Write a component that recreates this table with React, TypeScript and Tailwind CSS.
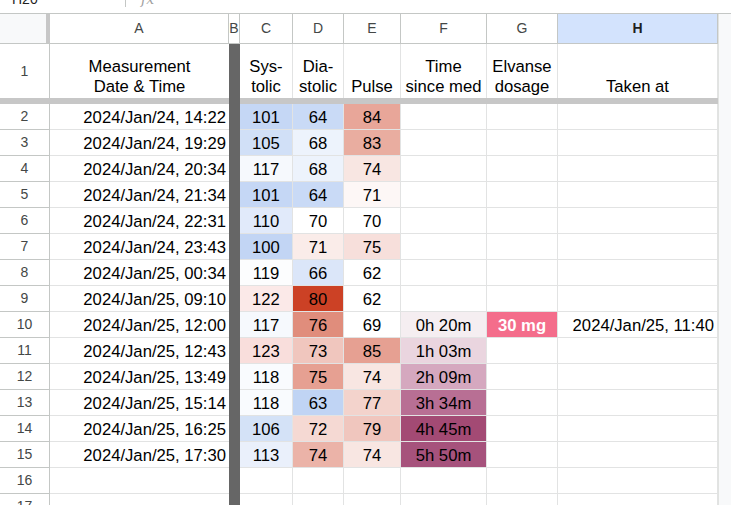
const rows = [
  { date: "2024/Jan/24, 14:22", sys: "101", sysBg: "bg-[#c5d7f5]", dia: "64", diaBg: "bg-[#c9daf6]", pulse: "84", pulseBg: "bg-[#e8a699]" },
  { date: "2024/Jan/24, 19:29", sys: "105", sysBg: "bg-[#d1e0f7]", dia: "68", diaBg: "bg-[#edf3fc]", pulse: "83", pulseBg: "bg-[#e9ada0]" },
  { date: "2024/Jan/24, 20:34", sys: "117", sysBg: "bg-[#f6f9fd]", dia: "68", diaBg: "bg-[#edf3fc]", pulse: "74", pulseBg: "bg-[#f8e6e2]" },
  { date: "2024/Jan/24, 21:34", sys: "101", sysBg: "bg-[#c5d7f5]", dia: "64", diaBg: "bg-[#c9daf6]", pulse: "71", pulseBg: "bg-[#fdf7f6]" },
  { date: "2024/Jan/24, 22:31", sys: "110", sysBg: "bg-[#e1eafa]", dia: "70", diaBg: "bg-white", pulse: "70", pulseBg: "bg-white" },
  { date: "2024/Jan/24, 23:43", sys: "100", sysBg: "bg-[#c2d5f4]", dia: "71", diaBg: "bg-[#faece9]", pulse: "75", pulseBg: "bg-[#f7dfdb]" },
  { date: "2024/Jan/25, 00:34", sys: "119", sysBg: "bg-[#fcfdfe]", dia: "66", diaBg: "bg-[#dbe6f9]", pulse: "62", pulseBg: "bg-white" },
  { date: "2024/Jan/25, 09:10", sys: "122", sysBg: "bg-[#fbe9e8]", dia: "80", diaBg: "bg-[#cc4125]", pulse: "62", pulseBg: "bg-white" },
  { date: "2024/Jan/25, 12:00", sys: "117", sysBg: "bg-[#f6f9fd]", dia: "76", diaBg: "bg-[#e08d7c]", pulse: "69", pulseBg: "bg-white", since: "0h 20m", sinceBg: "bg-[#f5eef1]", dose: "30 mg", taken: "2024/Jan/25, 11:40" },
  { date: "2024/Jan/25, 12:43", sys: "123", sysBg: "bg-[#f9dedc]", dia: "73", diaBg: "bg-[#f0c6be]", pulse: "85", pulseBg: "bg-[#e6a092]", since: "1h 03m", sinceBg: "bg-[#ead5df]" },
  { date: "2024/Jan/25, 13:49", sys: "118", sysBg: "bg-[#f9fbfe]", dia: "75", diaBg: "bg-[#e6a092]", pulse: "74", pulseBg: "bg-[#f8e6e2]", since: "2h 09m", sinceBg: "bg-[#d5a8bf]" },
  { date: "2024/Jan/25, 15:14", sys: "118", sysBg: "bg-[#f9fbfe]", dia: "63", diaBg: "bg-[#c0d4f4]", pulse: "77", pulseBg: "bg-[#f3d3cc]", since: "3h 34m", sinceBg: "bg-[#b86f94]" },
  { date: "2024/Jan/25, 16:25", sys: "106", sysBg: "bg-[#d4e2f7]", dia: "72", diaBg: "bg-[#f5d9d3]", pulse: "79", pulseBg: "bg-[#f0c6be]", since: "4h 45m", sinceBg: "bg-[#a34a74]" },
  { date: "2024/Jan/25, 17:30", sys: "113", sysBg: "bg-[#eaf0fb]", dia: "74", diaBg: "bg-[#ebb3a8]", pulse: "74", pulseBg: "bg-[#f8e6e2]", since: "5h 50m", sinceBg: "bg-[#a6527c]" },
];

type Row = {
  date?: string;
  sys?: string;
  sysBg?: string;
  dia?: string;
  diaBg?: string;
  pulse?: string;
  pulseBg?: string;
  since?: string;
  sinceBg?: string;
  dose?: string;
  taken?: string;
};

const cell = "h-[26px] pt-[1px] border-r border-b border-[#e2e3e3] flex items-center";

const DataRow = ({ n, r }: { n: number; r: Row }) => (
  <>
    <div className="h-[26px] border-r border-b border-[#c4c7c5] flex items-center justify-center text-[14px] text-[#444746]">
      {n}
    </div>
    <div className="h-[26px] pt-[1px] border-b border-[#e2e3e3] flex items-center justify-end pr-[3px]">{r.date}</div>
    <div className="h-[26px] bg-[#666666]" />
    <div className={`${cell} justify-center ${r.sysBg ?? ""}`}>{r.sys}</div>
    <div className={`${cell} justify-center ${r.diaBg ?? ""}`}>{r.dia}</div>
    <div className={`${cell} justify-center ${r.pulseBg ?? ""}`}>{r.pulse}</div>
    <div className={`${cell} justify-center ${r.sinceBg ?? ""}`}>{r.since}</div>
    <div className={`${cell} justify-center ${r.dose ? "bg-[#f46d8b] font-bold text-white" : ""}`}>{r.dose}</div>
    <div className={`${cell} justify-end pr-[3px]`}>{r.taken}</div>
  </>
);

const letters = ["A", "B", "C", "D", "E", "F", "G"];

export default function App() {
  return (
    <div className="w-[731px] h-[505px] overflow-hidden bg-white font-['Liberation_Sans',Arial,sans-serif] text-[16.67px] text-black">
      {/* formula bar, scrolled mostly out of view */}
      <div className="h-[14px] border-b border-[#c4c7c5] flex overflow-hidden">
        <div className="w-[125px] -mt-[8px] pl-[12px] text-[14px] leading-[14px] text-[#1f1f1f]">H20</div>
        <div className="w-px h-[7px] bg-[#c4c7c5]" />
        <div className="-mt-[8px] pl-[15px] text-[14px] leading-[14px] italic text-[#a0a0a0] font-['DejaVu_Serif',serif]">fx</div>
      </div>

      <div className="flex">
        <div className="grid w-[718px] grid-cols-[50px_179px_11px_53px_51px_57px_86px_71px_160px]">
          {/* column letters */}
          <div className="h-[30px] border-b border-[#c4c7c5] flex">
            <div className="flex-1 bg-[#f8f9fa]" />
            <div className="w-[4px] bg-[#c7c7c7]" />
          </div>
          {letters.map((l) => (
            <div
              key={l}
              className="h-[30px] border-r border-b border-[#c4c7c5] flex items-center justify-center text-[14px] text-[#444746]"
            >
              {l}
            </div>
          ))}
          <div className="h-[30px] border-r border-b border-[#c4c7c5] bg-[#d3e3fd] flex items-center justify-center text-[14px] font-bold text-[#1f1f1f]">
            H
          </div>

          {/* header row */}
          <div className="h-[54px] border-r border-[#c4c7c5] flex items-center justify-center text-[14px] text-[#444746]">1</div>
          <div className="h-[54px] flex items-end justify-center text-center leading-[20px] pb-[1px]">
            Measurement
            <br />
            Date &amp; Time
          </div>
          <div className="h-[54px] bg-[#666666]" />
          <div className="h-[54px] border-r border-[#e2e3e3] flex items-end justify-center text-center leading-[20px] pb-[1px]">
            Sys-
            <br />
            tolic
          </div>
          <div className="h-[54px] border-r border-[#e2e3e3] flex items-end justify-center text-center leading-[20px] pb-[1px]">
            Dia-
            <br />
            stolic
          </div>
          <div className="h-[54px] border-r border-[#e2e3e3] flex items-end justify-center text-center leading-[20px] pb-[1px]">
            Pulse
          </div>
          <div className="h-[54px] border-r border-[#e2e3e3] flex items-end justify-center text-center leading-[20px] pb-[1px] whitespace-nowrap">
            Time
            <br />
            since med
          </div>
          <div className="h-[54px] border-r border-[#e2e3e3] flex items-end justify-center text-center leading-[20px] pb-[1px]">
            Elvanse
            <br />
            dosage
          </div>
          <div className="h-[54px] border-r border-[#e2e3e3] flex items-end justify-center text-center leading-[20px] pb-[1px]">
            Taken at
          </div>

          {/* frozen row divider */}
          <div className="h-[6px] bg-[#c7c7c7]" />
          <div className="h-[6px] bg-[#c7c7c7]" />
          <div className="h-[6px] bg-[#666666]" />
          <div className="h-[6px] bg-[#c7c7c7] col-span-6" />

          {rows.map((r, i) => (
            <DataRow key={i} n={i + 2} r={r} />
          ))}
          <DataRow n={16} r={{}} />
          <DataRow n={17} r={{}} />
        </div>
        <div className="w-[13px] h-[491px] bg-[#f8f9fa] border-l border-[#e1e3e1]" />
      </div>
    </div>
  );
}
